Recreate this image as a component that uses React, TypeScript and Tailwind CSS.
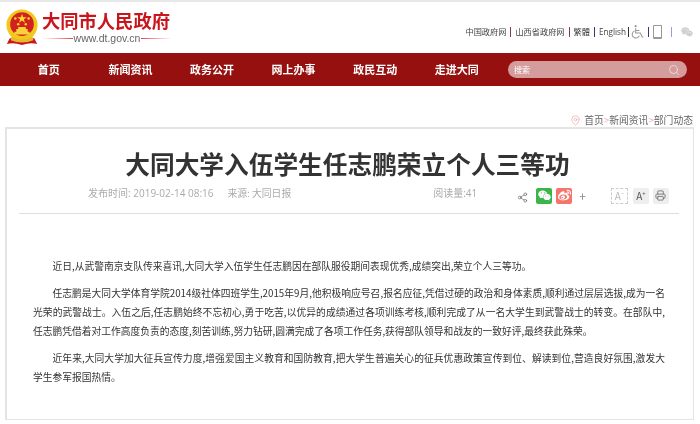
import React from 'react';
import { MapPin, Printer, Search, Share2 } from 'lucide-react';
import { FaWeibo, FaWeixin } from 'react-icons/fa';

const navItems = ['首页', '新闻资讯', '政务公开', '网上办事', '政民互动', '走进大同'];

const Emblem: React.FC = () => (
  <svg viewBox="0 0 36 40" className="h-[38px] w-[34px] shrink-0">
    <path d="M5 32 L2 38 Q9 36 18 39 Q27 36 34 38 L31 32 Z" fill="#c8161d" />
    <circle cx="18" cy="18" r="16.5" fill="#f2c81e" />
    <circle cx="18" cy="17" r="12.5" fill="#d3211f" />
    <polygon points="18,6 19.2,9.6 23,9.6 20,11.8 21.1,15.4 18,13.2 14.9,15.4 16,11.8 13,9.6 16.8,9.6" fill="#f9d92c" />
    <circle cx="11" cy="11" r="1.3" fill="#f9d92c" />
    <circle cx="25" cy="11" r="1.3" fill="#f9d92c" />
    <circle cx="14" cy="17" r="1.3" fill="#f9d92c" />
    <circle cx="22" cy="17" r="1.3" fill="#f9d92c" />
    <path d="M10 25 H26 V28 H10 Z M12 22 H24 V25 H12 Z M14 20 H22 V22 H14 Z" fill="#f7d23a" />
    <path d="M7 30 Q18 37 29 30 L30 34 Q18 39 6 34 Z" fill="#e8b92a" />
  </svg>
);

// wheelchair outline from the top bar
const Wheelchair: React.FC = () => (
  <svg viewBox="0 0 14 15" className="h-[15px] w-[13px]" fill="none" stroke="#999" strokeWidth="1.1">
    <circle cx="5" cy="1.8" r="1.2" fill="#999" stroke="none" />
    <path d="M5 4 V9.2 H10 L12 13.4 H13.4" />
    <path d="M5 6.4 H9" />
    <path d="M3.8 6.8 A4 4 0 1 0 9 12" />
  </svg>
);

const Divider: React.FC<{ color?: string }> = ({ color = 'bg-[#7a3b6a]' }) => (
  <span className={`mx-[4px] inline-block h-[10px] w-px ${color}`} />
);

const App: React.FC = () => {
  return (
    <div className="h-[424px] w-[700px] overflow-hidden bg-white font-['Noto_Sans_CJK_SC',sans-serif] blur-[0.3px]">
      <div className="h-[2px] bg-[#e8e8e8]" />

      <header className="flex h-[51px] items-start justify-between">
        <div className="ml-[5px] mt-[6px] flex">
          <Emblem />
          <div className="ml-[3px] w-[130px]">
            <div className="mt-[1px] text-[18.3px] font-bold leading-[22px] text-[#c9161d]">大同市人民政府</div>
            <div className="flex items-center text-[10.5px] leading-[14px] text-[#666] font-['Liberation_Sans',sans-serif]">
              <span className="h-px flex-1 bg-gradient-to-r from-white to-[#d8444a]" />
              <span className="mx-[1px]">www.dt.gov.cn</span>
              <span className="h-px flex-1 bg-gradient-to-l from-white to-[#d8444a]" />
            </div>
          </div>
        </div>
        <div className="mr-[7px] mt-[22px] flex items-center text-[8.2px] leading-[13px] text-[#444]">
          <span>中国政府网</span>
          <Divider />
          <span>山西省政府网</span>
          <Divider />
          <span>繁體</span>
          <Divider color="bg-[#2a3f7a]" />
          <span className="font-['Open_Sans',sans-serif]">English</span>
          <span className="mx-[2px] inline-block h-[10px] w-px bg-[#333]" />
          <Wheelchair />
          <span className="ml-[4px] mr-[4px] inline-block h-[10px] w-px bg-[#2a3f7a]" />
          <span className="h-[14px] w-[9px] rounded-[1px] border border-b-[2px] border-[#999]" />
          <span className="ml-[9px] mr-[9px] inline-block h-[10px] w-px bg-[#8fa3cf]" />
          <FaWeixin size={12} className="text-[#d0d0d0]" />
        </div>
      </header>

      <nav className="flex h-[33px] items-center bg-[#96100f] pl-[8px] pr-[13px]">
        {navItems.map((item) => (
          <a key={item} className="w-[81.6px] text-center text-[11px] font-bold text-white">
            {item}
          </a>
        ))}
        <div className="ml-auto flex h-[17px] w-[179px] items-center justify-between rounded-full bg-[#d59c9c] pl-[6px] pr-[7px] text-[8px] text-white">
          <span>搜索</span>
          <Search size={12} strokeWidth={1.6} className="text-[#f3e3e3]" />
        </div>
      </nav>

      <div className="mr-[7px] mt-[27px] flex h-[14px] items-center justify-end text-[9.8px] text-[#666]">
        <MapPin size={11} className="mr-[3px] text-[#f4b6bb]" />
        <span>首页</span>
        <span className="text-[#f4b6bb]">&gt;</span>
        <span>新闻资讯</span>
        <span className="text-[#f4b6bb]">&gt;</span>
        <span>部门动态</span>
      </div>

      <main className="ml-[5px] mr-[6px] h-[293px] border-2 border-[#e4e4e4] border-r-[1px] border-b-[1px]">
        <div className="ml-[12px] mr-[14px] h-[85px] border-b border-[#ddd]">
          <h1 className="pr-[3px] pt-[16px] text-center text-[24.7px] font-bold leading-[36px] text-[#333]">
            大同大学入伍学生任志鹏荣立个人三等功
          </h1>
          <div className="flex h-[29px] items-center pl-[69px] text-[9.8px] text-[#aaa]">
            <span className="-mt-[4px] font-['Open_Sans','Noto_Sans_CJK_SC',sans-serif] text-[10px]">发布时间: 2019-02-14 08:16</span>
            <span className="-mt-[4px] ml-[14px]">来源: 大同日报</span>
            <span className="-mt-[4px] ml-[142px] font-['Open_Sans','Noto_Sans_CJK_SC',sans-serif] text-[10px]">阅读量:41</span>
            <Share2 size={11} strokeWidth={1.3} className="ml-[40px] mt-[4px] text-[#555]" />
            <span className="ml-[8px] flex h-[16px] w-[16px] items-center justify-center rounded-[2px] bg-[#3bb54a]">
              <FaWeixin size={13} className="text-white" />
            </span>
            <span className="ml-[4px] flex h-[16px] w-[16px] items-center justify-center rounded-[2px] bg-[#f5756a]">
              <FaWeibo size={13} className="text-white" />
            </span>
            <span className="ml-[7px] text-[12px] text-[#888]">+</span>
            <span className="ml-[25px] flex h-[16px] w-[17px] items-center justify-center border border-dashed border-[#ccc] text-[10px] text-[#bbb]">
              A<span className="-mt-[4px] text-[6px]">−</span>
            </span>
            <span className="ml-[5px] flex h-[16px] w-[16px] items-center justify-center rounded-[2px] bg-[#eee] text-[10px] text-[#555]">
              A<span className="-mt-[4px] text-[6px]">+</span>
            </span>
            <span className="ml-[4px] flex h-[16px] w-[16px] items-center justify-center rounded-[2px] bg-[#eee]">
              <Printer size={11} className="text-[#777]" />
            </span>
          </div>
        </div>

        <article className="ml-[26px] mr-[28px] pt-[43px] text-justify text-[9.75px] leading-[19px] text-[#333]">
          <p className="mb-[8px] indent-[19.5px]">
            近日,从武警南京支队传来喜讯,大同大学入伍学生任志鹏因在部队服役期间表现优秀,成绩突出,荣立个人三等功。
          </p>
          <p className="mb-[8px] indent-[19.5px]">
            任志鹏是大同大学体育学院2014级社体四班学生,2015年9月,他积极响应号召,报名应征,凭借过硬的政治和身体素质,顺利通过层层选拔,成为一名光荣的武警战士。入伍之后,任志鹏始终不忘初心,勇于吃苦,以优异的成绩通过各项训练考核,顺利完成了从一名大学生到武警战士的转变。在部队中,任志鹏凭借着对工作高度负责的态度,刻苦训练,努力钻研,圆满完成了各项工作任务,获得部队领导和战友的一致好评,最终获此殊荣。
          </p>
          <p className="indent-[19.5px]">
            近年来,大同大学加大征兵宣传力度,增强爱国主义教育和国防教育,把大学生普遍关心的征兵优惠政策宣传到位、解读到位,营造良好氛围,激发大学生参军报国热情。
          </p>
        </article>
      </main>
    </div>
  );
};

export default App;
